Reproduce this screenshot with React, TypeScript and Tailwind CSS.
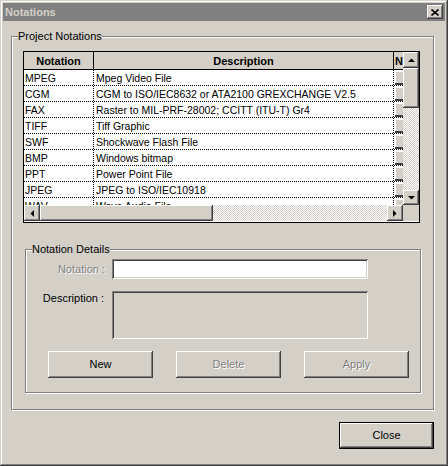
import React from "react"

// Classic Win2000 "Notations" dialog

const ROWS = [
  ["MPEG", "Mpeg Video File"],
  ["CGM", "CGM to ISO/IEC8632 or ATA2100 GREXCHANGE V2.5"],
  ["FAX", "Raster to MIL-PRF-28002; CCITT (ITU-T) Gr4"],
  ["TIFF", "Tiff Graphic"],
  ["SWF", "Shockwave Flash File"],
  ["BMP", "Windows bitmap"],
  ["PPT", "Power Point File"],
  ["JPEG", "JPEG to ISO/IEC10918"],
  ["WAV", "Wave Audio File"],
]

const raised =
  "bg-[#d4d0c8] shadow-[inset_-1px_-1px_#404040,inset_1px_1px_#ffffff,inset_-2px_-2px_#808080,inset_2px_2px_#d4d0c8]"
const sunken =
  "shadow-[inset_1px_1px_#808080,inset_-1px_-1px_#ffffff,inset_2px_2px_#404040,inset_-2px_-2px_#d4d0c8]"
const dither =
  "bg-[repeating-conic-gradient(#ffffff_0_25%,#d4d0c8_0_50%)] bg-[length:2px_2px]"

function Arrow({ dir }: { dir: "up" | "down" | "left" | "right" }) {
  const pts = {
    up: "0,4 7,4 3.5,0.5",
    down: "0,0 7,0 3.5,3.5",
    left: "4,0 4,7 0.5,3.5",
    right: "0,0 0,7 3.5,3.5",
  }[dir]
  const vert = dir === "up" || dir === "down"
  return (
    <svg width={vert ? 7 : 4} height={vert ? 4 : 7} viewBox={vert ? "0 0 7 4" : "0 0 4 7"}>
      <polygon points={pts} fill="#000" />
    </svg>
  )
}

function Btn({ label, disabled }: { label: string; disabled?: boolean }) {
  return (
    <div
      className={`${raised} w-[105px] h-[27px] flex items-center justify-center text-[11px] ${
        disabled ? "text-[#808080] [text-shadow:1px_1px_#ffffff]" : "text-black"
      }`}
    >
      {label}
    </div>
  )
}

export default function App() {
  return (
    <div
      className="w-[448px] h-[466px] bg-[#d4d0c8] p-[3px] flex flex-col text-[11px] leading-[13px] text-black shadow-[inset_-1px_-1px_#404040,inset_1px_1px_#d4d0c8,inset_-2px_-2px_#808080,inset_2px_2px_#ffffff]"
      style={{ fontFamily: '"Liberation Sans", Arial, sans-serif' }}
    >
      {/* title bar */}
      <div className="h-[18px] bg-[#808080] flex items-center justify-between pl-[2px] pr-[2px]">
        <span className="font-bold text-[#d4d0c8] text-[11px]">Notations</span>
        <div className={`${raised} w-[16px] h-[14px] flex items-center justify-center`}>
          <svg width="8" height="7" viewBox="0 0 8 7">
            <path d="M0.5 0.5 L7.5 6.5 M7.5 0.5 L0.5 6.5" stroke="#000" strokeWidth="1.6" />
          </svg>
        </div>
      </div>

      {/* Project Notations */}
      <fieldset className="ml-[8px] mt-[9px] w-[423px] h-[380px] border border-[#808080] shadow-[inset_1px_1px_#ffffff,1px_1px_#ffffff]">
        <legend className="ml-[6px] px-0 bg-[#d4d0c8] leading-[13px]">Project Notations</legend>

        <div className="pl-[11px]">
          {/* list view */}
          <div className="mt-[8px] w-[397px] h-[172px] border border-black flex flex-col bg-white">
            <div className="flex h-[153px]">
              <div className="w-[379px] flex flex-col overflow-hidden">
                <div className="flex h-[18px] bg-[#d4d0c8] border-b border-black font-bold shrink-0 pt-[2px]">
                  <div className="w-[70px] border-r border-black -mt-[2px] pt-[2px] flex items-center justify-center">
                    Notation
                  </div>
                  <div className="w-[300px] border-r border-black -mt-[2px] pt-[2px] flex items-center justify-center">
                    Description
                  </div>
                  <div className="w-[9px] flex items-center pl-[1px] overflow-hidden">N</div>
                </div>
                {ROWS.map(([n, d]) => (
                  <div key={n} className="flex h-[16px] shrink-0 border-b border-dotted border-black text-[10.5px]">
                    <div className="w-[70px] border-r border-dotted border-black pl-[1px] pt-[2px] flex items-center whitespace-nowrap">
                      {n}
                    </div>
                    <div className="w-[300px] border-r border-dotted border-black pl-[2px] pt-[2px] flex items-center whitespace-nowrap overflow-hidden">
                      {d}
                    </div>
                    <div className="w-[9px] flex items-end justify-end">
                      <div className="w-[8px] h-[14px] bg-[#d4d0c8] shadow-[inset_1px_1px_#ffffff] border-b-2 border-[#404040]" />
                    </div>
                  </div>
                ))}
              </div>
              <div className="w-[16px] flex flex-col">
                <div className={`${raised} h-[16px] flex items-center justify-center`}>
                  <Arrow dir="up" />
                </div>
                <div className={`${raised} h-[40px]`} />
                <div className={`${dither} flex-1`} />
                <div className={`${raised} h-[15px] flex items-center justify-center`}>
                  <Arrow dir="down" />
                </div>
              </div>
            </div>
            <div className="flex h-[16px]">
              <div className={`${raised} w-[16px] flex items-center justify-center`}>
                <Arrow dir="left" />
              </div>
              <div className={`${raised} w-[173px]`} />
              <div className={`${dither} w-[174px]`} />
              <div className={`${raised} w-[16px] flex items-center justify-center`}>
                <Arrow dir="right" />
              </div>
              <div className="flex-1 bg-[#d4d0c8]" />
            </div>
          </div>

          {/* Notation Details */}
          <fieldset className="ml-[2px] mt-[20px] w-[396px] h-[150px] border border-[#808080] shadow-[inset_1px_1px_#ffffff,1px_1px_#ffffff]">
            <legend className="ml-[6px] px-0 bg-[#d4d0c8] leading-[13px]">Notation Details</legend>
            <div className="flex items-center mt-[3px]">
              <div className="w-[79px] text-right text-[#808080] [text-shadow:1px_1px_#ffffff]">Notation :</div>
              <div className={`ml-[7px] w-[256px] h-[20px] bg-white ${sunken}`} />
            </div>
            <div className="flex items-start mt-[12px]">
              <div className="w-[78px] text-right pt-[1px]">Description :</div>
              <div className={`ml-[8px] w-[256px] h-[48px] bg-[#d4d0c8] ${sunken}`} />
            </div>
            <div className="flex gap-[23px] ml-[22px] mt-[12px]">
              <Btn label="New" />
              <Btn label="Delete" disabled />
              <Btn label="Apply" disabled />
            </div>
          </fieldset>
        </div>
      </fieldset>

      <div className="flex justify-end mt-[12px] mr-[11px]">
        <div className="border border-black">
          <div className={`${raised} w-[93px] h-[25px] flex items-center justify-center`}>Close</div>
        </div>
      </div>
    </div>
  )
}
